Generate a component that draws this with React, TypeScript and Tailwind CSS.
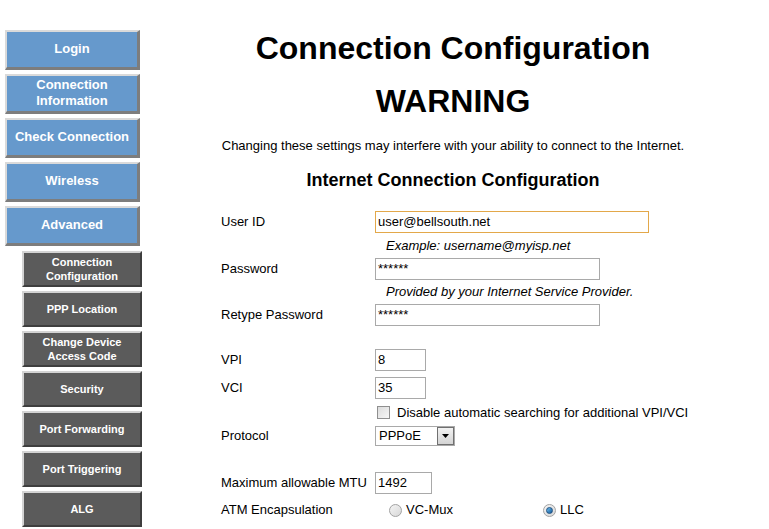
import React from 'react'

const blueItems = [['Login'], ['Connection', 'Information'], ['Check Connection'], ['Wireless'], ['Advanced']]
const grayItems = [
  ['Connection', 'Configuration'],
  ['PPP Location'],
  ['Change Device', 'Access Code'],
  ['Security'],
  ['Port Forwarding'],
  ['Port Triggering'],
  ['ALG'],
]

function BlueButton({ lines }: { lines: string[] }) {
  return (
    <div className="w-[135px] h-[40px] pb-[2px] flex flex-col items-center justify-center bg-[#6699cc] border-t-2 border-l-2 border-t-[#dadada] border-l-[#dadada] border-b-[3px] border-r-[3px] border-b-[#7d7d7d] border-r-[#7d7d7d] text-white font-bold text-[13px] leading-[16px] text-center">
      {lines.map((l) => (
        <span key={l}>{l}</span>
      ))}
    </div>
  )
}

function GrayButton({ lines }: { lines: string[] }) {
  return (
    <div className="w-[120px] h-[36px] pb-[1px] flex flex-col items-center justify-center bg-[#5b5b5b] border-t-2 border-l-2 border-t-[#d4d4d4] border-l-[#d4d4d4] border-b-2 border-r-2 border-b-[#3e3e3e] border-r-[#3e3e3e] text-white font-bold text-[11px] leading-[14px] text-center">
      {lines.map((l) => (
        <span key={l}>{l}</span>
      ))}
    </div>
  )
}

function TextBox({ value, width, focused }: { value: string; width: string; focused?: boolean }) {
  return (
    <div
      className={`${width} h-[22px] flex items-center px-[2px] bg-white border text-[13px] ${
        focused ? 'border-[#e3a84a]' : 'border-[#a9a9a9]'
      }`}
    >
      {value}
    </div>
  )
}

function Row({ label, h, children }: { label?: string; h: string; children?: React.ReactNode }) {
  return (
    <div className={`flex items-center ${h}`}>
      <div className="w-[154px] shrink-0">{label}</div>
      {children}
    </div>
  )
}

function Radio({ checked }: { checked?: boolean }) {
  return (
    <div className="w-[13px] h-[13px] rounded-full border border-[#a2a2a2] bg-gradient-to-br from-[#f4f4f4] to-[#d8d8d8] flex items-center justify-center">
      {checked && <div className="w-[7px] h-[7px] rounded-full bg-gradient-to-br from-[#6fc0f0] to-[#105a9a] border border-[#1e4f80]" />}
    </div>
  )
}

export default function App() {
  return (
    <div className="w-[769px] h-[529px] overflow-hidden bg-white text-black font-['Liberation_Sans',Arial,sans-serif] flex">
      <div className="w-[150px] shrink-0 pt-[30px] pl-[5px] flex flex-col">
        <div className="flex flex-col gap-[4px]">
          {blueItems.map((l) => (
            <BlueButton key={l.join()} lines={l} />
          ))}
        </div>
        <div className="flex flex-col gap-[4px] mt-[5px] ml-[17px]">
          {grayItems.map((l) => (
            <GrayButton key={l.join()} lines={l} />
          ))}
        </div>
      </div>

      <div className="w-[606px] flex flex-col">
        <div className="mt-[28px] h-[40px] flex items-center justify-center text-[32px] font-bold">
          Connection Configuration
        </div>
        <div className="mt-[13px] h-[40px] flex items-center justify-center text-[32px] font-bold">WARNING</div>
        <div className="mt-[17px] h-[16px] flex items-center justify-center text-[13px]">
          Changing these settings may interfere with your ability to connect to the Internet.
        </div>
        <div className="mt-[14px] h-[24px] flex items-center justify-center text-[18px] font-bold">
          Internet Connection Configuration
        </div>

        <div className="mt-[18px] ml-[71px] flex flex-col text-[13px]">
          <Row label="User ID" h="h-[24px]">
            <TextBox value="user@bellsouth.net" width="w-[274px]" focused />
          </Row>
          <Row h="h-[23px]">
            <span className="italic pl-[11px]">Example: username@myisp.net</span>
          </Row>
          <Row label="Password" h="h-[23px]">
            <TextBox value="******" width="w-[225px]" />
          </Row>
          <Row h="h-[23px]">
            <span className="italic pl-[11px]">Provided by your Internet Service Provider.</span>
          </Row>
          <Row label="Retype Password" h="h-[23px]">
            <TextBox value="******" width="w-[225px]" />
          </Row>
          <div className="h-[22px]" />
          <Row label="VPI" h="h-[23px]">
            <TextBox value="8" width="w-[51px]" />
          </Row>
          <div className="h-[5px]" />
          <Row label="VCI" h="h-[24px]">
            <TextBox value="35" width="w-[51px]" />
          </Row>
          <Row h="h-[25px]">
            <div className="ml-[2px] w-[13px] h-[13px] border border-[#8f8f8f] bg-gradient-to-br from-[#dcdcdc] to-[#f6f6f6]" />
            <span className="ml-[7px]">Disable automatic searching for additional VPI/VCI</span>
          </Row>
          <Row label="Protocol" h="h-[22px]">
            <div className="w-[80px] h-[20px] border border-[#a9a9a9] bg-white flex items-center justify-between">
              <span className="pl-[3px] text-[13px]">PPPoE</span>
              <div className="w-[17px] h-[18px] border border-[#707070] bg-gradient-to-b from-[#f2f2f2] to-[#d4d4d4] flex items-center justify-center">
                <svg width="7" height="4" viewBox="0 0 7 4">
                  <path d="M0 0h7L3.5 4z" fill="#000" />
                </svg>
              </div>
            </div>
          </Row>
          <div className="h-[24px]" />
          <Row label="Maximum allowable MTU" h="h-[24px]">
            <TextBox value="1492" width="w-[57px]" />
          </Row>
          <Row label="ATM Encapsulation" h="h-[30px]">
            <div className="flex items-center">
              <div className="ml-[14px] flex items-center gap-[4px] w-[154px]">
                <Radio />
                <span>VC-Mux</span>
              </div>
              <div className="flex items-center gap-[4px]">
                <Radio checked />
                <span>LLC</span>
              </div>
            </div>
          </Row>
        </div>
      </div>
    </div>
  )
}
